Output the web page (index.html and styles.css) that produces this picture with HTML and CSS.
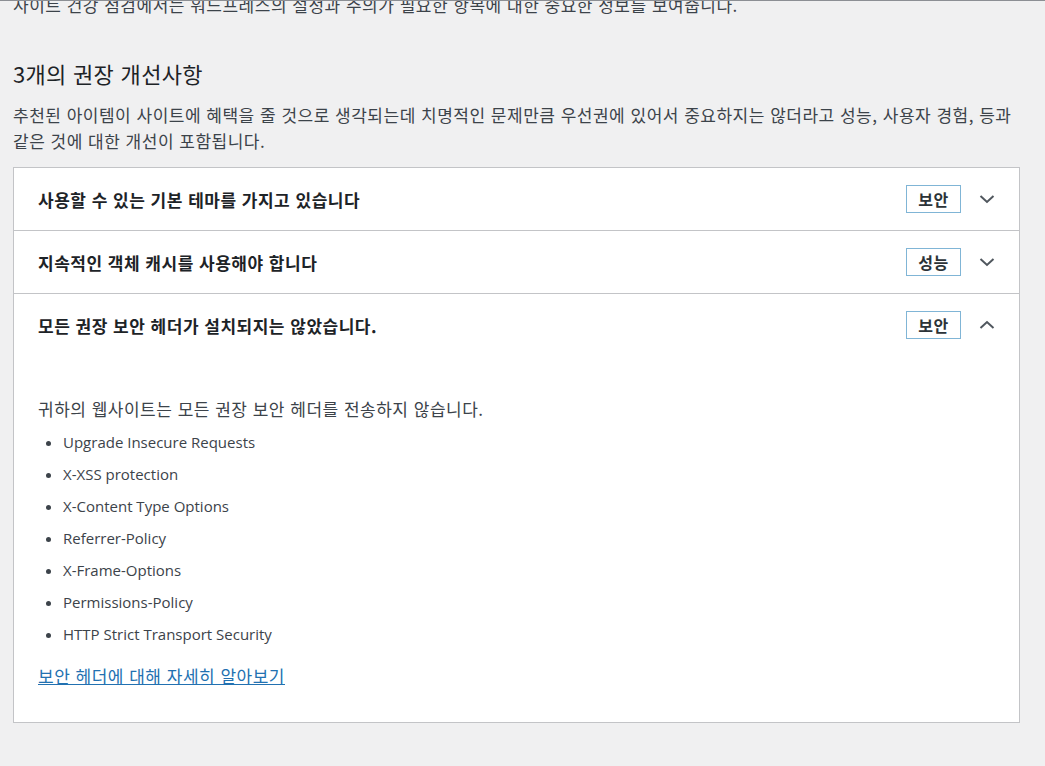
FILE: index.html
```html
<!DOCTYPE html>
<html lang="ko">
<head>
    <meta charset="UTF-8">
    <meta name="viewport" content="width=device-width, initial-scale=1.0">
    <title>사이트 건강</title>
    <link rel="stylesheet" href="styles.css">
</head>
<body>
    <div class="health-check">
        <p class="intro">사이트 건강 점검에서는 워드프레스의 설정과 주의가 필요한 항목에 대한 중요한 정보를 보여줍니다.</p>

        <h2 class="section-title">3개의 권장 개선사항</h2>
        <p class="section-desc">추천된 아이템이 사이트에 혜택을 줄 것으로 생각되는데 치명적인 문제만큼 우선권에 있어서 중요하지는 않더라고 성능, 사용자 경험, 등과 같은 것에 대한 개선이 포함됩니다.</p>

        <div class="accordion">
            <div class="accordion-item">
                <div class="accordion-heading">
                    <span class="accordion-title">사용할 수 있는 기본 테마를 가지고 있습니다</span>
                    <span class="badge">보안</span>
                    <svg class="chevron" width="16" height="16" viewBox="0 0 16 16"><path d="M1.5 5 8 11 14.5 5" /></svg>
                </div>
            </div>
            <div class="accordion-item">
                <div class="accordion-heading">
                    <span class="accordion-title">지속적인 객체 캐시를 사용해야 합니다</span>
                    <span class="badge">성능</span>
                    <svg class="chevron" width="16" height="16" viewBox="0 0 16 16"><path d="M1.5 5 8 11 14.5 5" /></svg>
                </div>
            </div>
            <div class="accordion-item open">
                <div class="accordion-heading">
                    <span class="accordion-title">모든 권장 보안 헤더가 설치되지는 않았습니다.</span>
                    <span class="badge">보안</span>
                    <svg class="chevron" width="16" height="16" viewBox="0 0 16 16"><path d="M1.5 11 8 5 14.5 11" /></svg>
                </div>
                <div class="accordion-panel">
                    <p>귀하의 웹사이트는 모든 권장 보안 헤더를 전송하지 않습니다.</p>
                    <ul class="header-list">
                        <li>Upgrade Insecure Requests</li>
                        <li>X-XSS protection</li>
                        <li>X-Content Type Options</li>
                        <li>Referrer-Policy</li>
                        <li>X-Frame-Options</li>
                        <li>Permissions-Policy</li>
                        <li>HTTP Strict Transport Security</li>
                    </ul>
                    <a class="more-link" href="#">보안 헤더에 대해 자세히 알아보기</a>
                </div>
            </div>
        </div>
    </div>
</body>
</html>
```

FILE: styles.css
```css
body {
    margin: 0;
    padding: 0;
    background-color: #f0f0f1;
    color: #3c434a;
    font-family: "Noto Sans CJK KR", "Open Sans", sans-serif;
    font-size: 17px;
    letter-spacing: 0.5px;
    border-top: 1px solid #8c8f94;
}

.health-check {
    padding: 0 25px 0 13px;
}

.intro {
    margin: -9px 0 0;
    line-height: 26px;
    white-space: nowrap;
}

.section-title {
    margin: 40px 0 0;
    font-size: 22px;
    font-weight: 400;
    line-height: 30px;
    letter-spacing: 0.3px;
    color: #1d2327;
}

.section-desc {
    margin: 14px 0 0;
    line-height: 26px;
}

.accordion {
    margin-top: 13px;
    background-color: #fff;
    border: 1px solid #c3c4c7;
}

.accordion-item {
    border-bottom: 1px solid #c3c4c7;
}

.accordion-item:last-child {
    border-bottom: 0;
}

.accordion-heading {
    display: flex;
    align-items: center;
    height: 62px;
    padding: 0 24px;
}

.accordion-title {
    flex: 1;
    font-weight: 700;
    color: #1d2327;
}

.badge {
    display: inline-block;
    width: 53px;
    height: 26px;
    line-height: 26px;
    text-align: center;
    border: 1px solid #80b5d6;
    font-size: 16px;
    font-weight: 700;
    color: #2c3338;
}

.chevron {
    margin-left: 18px;
    fill: none;
    stroke: #50575e;
    stroke-width: 2;
}

.accordion-panel {
    padding: 40px 24px 33px;
}

.accordion-panel p {
    margin: 0;
    line-height: 26px;
}

.header-list {
    margin: 4px 0 0;
    padding-left: 25px;
    font-family: "Open Sans", sans-serif;
    font-size: 15px;
    letter-spacing: 0;
}

.header-list li {
    line-height: 32px;
}

.more-link {
    display: inline-block;
    margin-top: 13px;
    line-height: 26px;
    color: #2271b1;
}
```
